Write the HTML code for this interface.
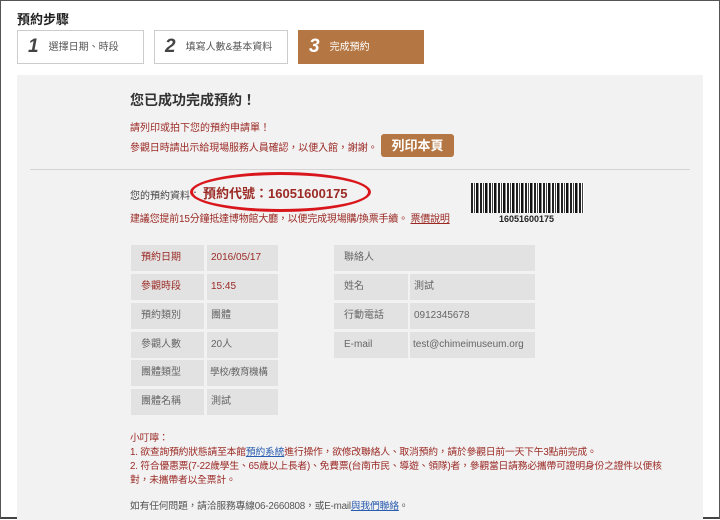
<!DOCTYPE html>
<html><head><meta charset="utf-8"><style>
*{margin:0;padding:0;box-sizing:border-box}
body{width:720px;height:519px;background:#fff;position:relative;overflow:hidden;font-family:"Liberation Sans","Noto Sans CJK TC",sans-serif;border:1px solid #555;border-bottom:2px solid #444}
.a{position:absolute;white-space:nowrap}
.step{position:absolute;top:29px;height:34px;border:1px solid #ccc;background:#fff;font-size:10px;color:#555;line-height:32px}
.step b{font-size:19px;font-style:italic;color:#444;margin:0 10px 0 10px;vertical-align:-2px}
.panel{position:absolute;left:16px;top:74px;width:686px;height:445px;background:#f2f2f2}
.c{position:absolute;background:#e2e2e2;font-size:10px;color:#666;line-height:26px;height:26px;padding-left:10px;overflow:hidden}
.v{padding-left:4px}
.r{color:#9b2a25}
</style></head><body>
<div class="a" style="left:16px;top:8px;font-size:13px;font-weight:bold;color:#222">預約步驟</div>
<div class="step" style="left:16px;width:127px"><b>1</b>選擇日期、時段</div>
<div class="step" style="left:153px;width:134px"><b>2</b>填寫人數&amp;基本資料</div>
<div class="step" style="left:297px;width:126px;background:#b47643;border-color:#b47643;color:#fff"><b style="color:#fff">3</b>完成預約</div>
<div class="panel"></div>
<div class="a" style="left:129px;top:89px;font-size:14px;font-weight:bold;color:#333">您已成功完成預約！</div>
<div class="a r" style="left:129px;top:118px;font-size:10px">請列印或拍下您的預約申請單！</div>
<div class="a r" style="left:129px;top:138px;font-size:10px;letter-spacing:-0.1px">參觀日時請出示給現場服務人員確認，以便入館，謝謝。</div>
<div class="a" style="left:380px;top:133px;width:73px;height:23px;background:#b47643;border-radius:3px;color:#fff;font-size:13px;font-weight:bold;text-align:center;line-height:23px">列印本頁</div>
<div class="a" style="left:29px;top:168px;width:660px;height:1px;background:#d4d4d4"></div>
<div class="a" style="left:129px;top:186px;font-size:10px;color:#444">您的預約資料：</div>
<div class="a r" style="left:202px;top:182px;font-size:13px;font-weight:bold">預約代號：16051600175</div>
<div class="a" style="left:189px;top:171px;width:181px;height:40px;border:3px solid #d9161c;border-radius:50%"></div>
<div class="a r" style="left:129px;top:209px;font-size:10px;letter-spacing:-0.2px">建議您提前15分鐘抵達博物館大廳，以便完成現場購/換票手續。 <u>票價說明</u></div>
<div class="a" style="left:470px;top:182px;width:113px;height:30px;background:repeating-linear-gradient(90deg,#222 0 2px,#fff 2px 3px,#444 3px 4px,#fff 4px 5px,#111 5px 7px,#888 7px 8px,#fff 8px 9px)"></div>
<div class="a" style="left:498px;top:213px;font-size:9px;font-weight:bold;color:#222">16051600175</div>

<div class="c r" style="left:130px;top:244px;width:73px">預約日期</div><div class="c r v" style="left:206px;top:244px;width:71px">2016/05/17</div>
<div class="c r" style="left:130px;top:273px;width:73px">參觀時段</div><div class="c r v" style="left:206px;top:273px;width:71px">15:45</div>
<div class="c" style="left:130px;top:302px;width:73px">預約類別</div><div class="c v" style="left:206px;top:302px;width:71px">團體</div>
<div class="c" style="left:130px;top:331px;width:73px">參觀人數</div><div class="c v" style="left:206px;top:331px;width:71px">20人</div>
<div class="c" style="left:130px;top:359px;width:73px">團體類型</div><div class="c" style="left:206px;top:359px;width:71px;padding-left:3px;font-size:9.5px;letter-spacing:-0.3px">學校/教育機構</div>
<div class="c" style="left:130px;top:388px;width:73px">團體名稱</div><div class="c v" style="left:206px;top:388px;width:71px">測試</div>

<div class="c" style="left:333px;top:244px;width:201px">聯絡人</div>
<div class="c" style="left:333px;top:273px;width:74px">姓名</div><div class="c v" style="left:409px;top:273px;width:125px">測試</div>
<div class="c" style="left:333px;top:302px;width:74px">行動電話</div><div class="c v" style="left:409px;top:302px;width:125px">0912345678</div>
<div class="c" style="left:333px;top:331px;width:74px">E-mail</div><div class="c" style="left:409px;top:331px;width:125px;padding-left:3px">test@chimeimuseum.org</div>

<div class="a r" style="left:129px;top:431px;font-size:9.8px;line-height:14px;letter-spacing:-0.2px">小叮嚀：<br>1. 欲查詢預約狀態請至本館<u style="color:#2a5db0">預約系統</u>進行操作，欲修改聯絡人、取消預約，請於參觀日前一天下午3點前完成。<br>2. 符合優惠票(7-22歲學生、65歲以上長者)、免費票(台南市民、導遊、領隊)者，參觀當日請務必攜帶可證明身份之證件以便核<br>對，未攜帶者以全票計。</div>
<div class="a" style="left:129px;top:497px;font-size:9.8px;color:#555;letter-spacing:-0.2px">如有任何問題，請洽服務專線06-2660808，或E-mail<u style="color:#2a5db0">與我們聯絡</u>。</div>
</body></html>
